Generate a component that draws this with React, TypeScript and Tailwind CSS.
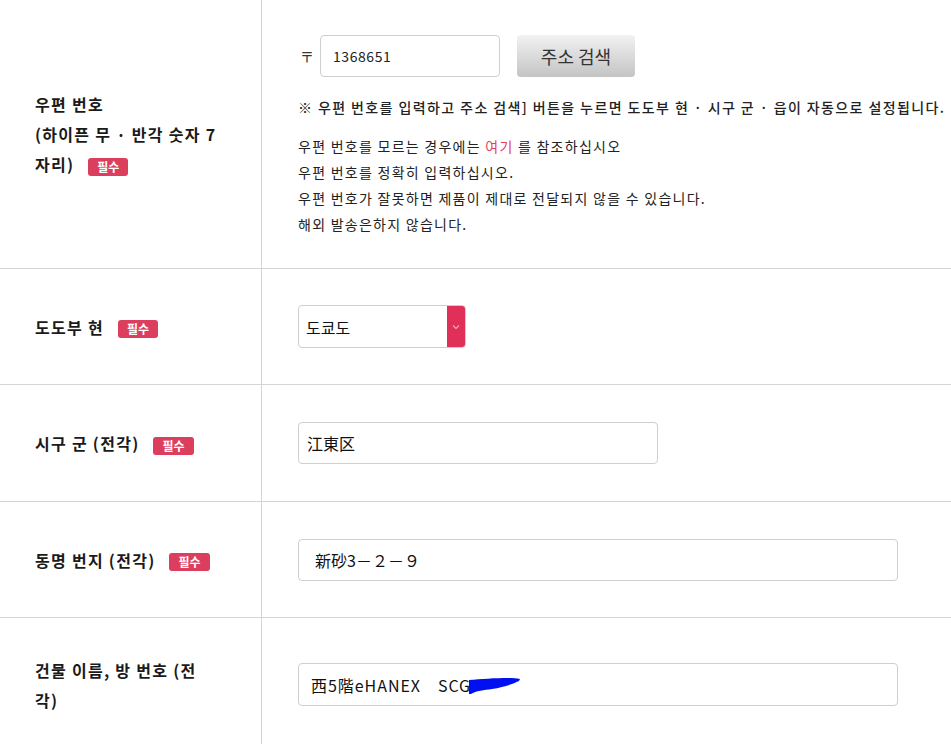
import React from "react";

const FONT = "font-['Noto_Sans_CJK_KR','Noto_Sans_CJK_JP',sans-serif]";

// 필수 배지
const Required = () => (
  <span className="ml-[14px] inline-flex h-[18px] items-center rounded-[3px] bg-[#dc3e5e] px-[9px] align-middle text-[12px] font-bold leading-none tracking-normal text-white">
    필수
  </span>
);

const Row = ({
  label,
  children,
  height,
}: {
  label: React.ReactNode;
  children: React.ReactNode;
  height: string;
}) => (
  <div className={`grid grid-cols-[262px_1fr] border-b border-[#d4d4d4] ${height}`}>
    <div className="flex items-center border-r border-[#d4d4d4] pl-[35px]">
      <div className="w-[180px] text-[16px] font-semibold leading-[30px] tracking-[0.08em] text-[#1a1a1a]">
        {label}
      </div>
    </div>
    <div className="flex items-center pl-[36px]">{children}</div>
  </div>
);

const TextBox = ({ value, width, pl = "pl-[8px]" }: { value: string; width: string; pl?: string }) => (
  <div
    className={`flex h-[42px] items-center rounded-[4px] border border-[#cfcfcf] bg-white ${pl} text-[16px] text-[#111] ${width}`}
  >
    {value}
  </div>
);

export default function App() {
  return (
    <div className={`min-h-[744px] w-[951px] overflow-hidden bg-white ${FONT}`}>
      {/* 우편 번호 */}
      <Row
        height="h-[269px]"
        label={
          <>
            우편 번호
            <br />
            <span className="whitespace-nowrap">(하이픈 무 · 반각 숫자 7</span>
            <br />
            자리)
            <Required />
          </>
        }
      >
        <div className="pt-[4px]">
          <div className="flex items-center">
            <span className="w-[22px] pl-[2px] text-[14px] text-[#333]">〒</span>
            <div className="flex h-[42px] w-[180px] items-center rounded-[4px] border border-[#cfcfcf] pl-[12px] text-[14px] tracking-[0.04em] text-[#222]">
              1368651
            </div>
            <button className="ml-[17px] h-[42px] w-[118px] rounded-[4px] bg-gradient-to-b from-[#f2f2f2] to-[#c4c4c4] text-[18px] text-[#333]">
              주소 검색
            </button>
          </div>
          <p className="mt-[20px] whitespace-nowrap text-[14px] font-medium tracking-[0.1em] text-[#222]">
            ※ 우편 번호를 입력하고 주소 검색] 버튼을 누르면 도도부 현 · 시구 군 · 읍이 자동으로 설정됩니다.
          </p>
          <div className="mt-[15px] text-[14px] leading-[26px] tracking-[0.09em] text-[#222]">
            <p>
              우편 번호를 모르는 경우에는 <span className="text-[#e2405f]">여기</span> 를 참조하십시오
            </p>
            <p>우편 번호를 정확히 입력하십시오.</p>
            <p>우편 번호가 잘못하면 제품이 제대로 전달되지 않을 수 있습니다.</p>
            <p>해외 발송은하지 않습니다.</p>
          </div>
        </div>
      </Row>

      {/* 도도부 현 */}
      <Row
        height="h-[116px]"
        label={
          <>
            도도부 현
            <Required />
          </>
        }
      >
        <div className="flex h-[43px] w-[168px] items-stretch overflow-hidden rounded-[4px] border border-[#cfcfcf]">
          <div className="flex flex-1 items-center pl-[7px] text-[16px] text-[#111]">도쿄도</div>
          <div className="flex w-[18px] items-center justify-center bg-[#e0305a]">
            <svg width="8" height="6" viewBox="0 0 8 6" fill="none">
              <path d="M1 1.5 L4 4.5 L7 1.5" stroke="#f5a3b5" strokeWidth="1.2" />
            </svg>
          </div>
        </div>
      </Row>

      {/* 시구 군 */}
      <Row
        height="h-[117px]"
        label={
          <>
            시구 군 (전각)
            <Required />
          </>
        }
      >
        <TextBox value="江東区" width="w-[360px]" />
      </Row>

      {/* 동명 번지 */}
      <Row
        height="h-[116px]"
        label={
          <>
            동명 번지 (전각)
            <Required />
          </>
        }
      >
        <TextBox value="新砂3－２－９" width="w-[600px]" pl="pl-[16px]" />
      </Row>

      {/* 건물 이름 */}
      <Row height="h-[134px]" label={<>건물 이름, 방 번호 (전각)</>}>
        <div className="flex h-[43px] w-[600px] items-center rounded-[4px] border border-[#cfcfcf] pl-[12px] text-[16px] tracking-[0.06em] text-[#111]">
          <span>西5階eHANEX　SCG</span>
          {/* 가림 처리 낙서 */}
          <svg width="52" height="18" viewBox="0 0 52 18" className="-ml-[3px] mt-[2px]">
            <path
              d="M1 3 C12 2 28 1 40 1 C45 1 49 1 52 2 L51 4 C45 7 36 10 24 12 C16 13 8 14 3 17 L1 17 Z"
              fill="#0010f0"
            />
          </svg>
        </div>
      </Row>
    </div>
  );
}
